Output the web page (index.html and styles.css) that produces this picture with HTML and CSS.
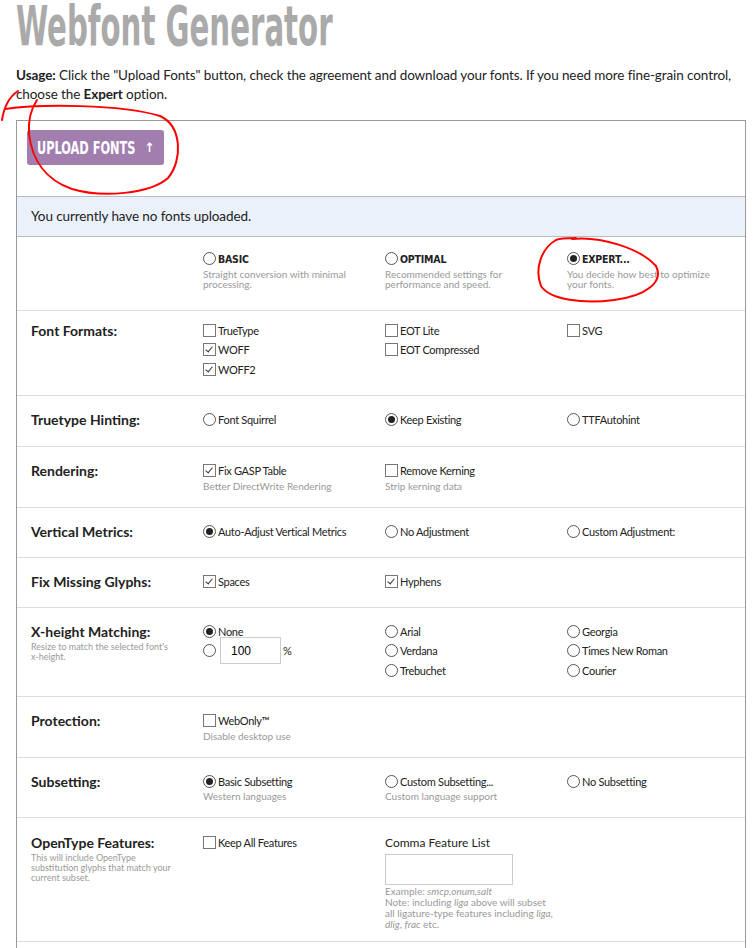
FILE: index.html
```html
<!DOCTYPE html>
<html lang="en">
<head>
    <meta charset="UTF-8">
    <title>Webfont Generator</title>
    <link rel="stylesheet" href="styles.css">
</head>
<body>
    <div class="page">
        <h1 class="title"><span class="title-text">Webfont Generator</span></h1>
        <p class="usage"><b>Usage:</b> Click the "Upload Fonts" button, check the agreement and download your fonts. If you need more fine-grain control, choose the <b>Expert</b> option.</p>

        <div class="generator">
            <div class="upload">
                <button class="upload-btn"><span class="btn-label">UPLOAD FONTS</span><span class="arrow">&#8593;</span></button>
            </div>
            <div class="notice">You currently have no fonts uploaded.</div>

            <div class="row modes">
                <div class="row-label"></div>
                <div class="cell">
                    <div class="opt mode"><span class="radio"></span>BASIC</div>
                    <div class="desc">Straight conversion with minimal processing.</div>
                </div>
                <div class="cell">
                    <div class="opt mode"><span class="radio"></span>OPTIMAL</div>
                    <div class="desc">Recommended settings for performance and speed.</div>
                </div>
                <div class="cell">
                    <div class="opt mode"><span class="radio on"></span>EXPERT...</div>
                    <div class="desc">You decide how best to optimize your fonts.</div>
                </div>
            </div>

            <div class="row formats">
                <div class="row-label">Font Formats:</div>
                <div class="cell">
                    <div class="opt"><span class="check"></span>TrueType</div>
                    <div class="opt"><span class="check on"></span>WOFF</div>
                    <div class="opt"><span class="check on"></span>WOFF2</div>
                </div>
                <div class="cell">
                    <div class="opt"><span class="check"></span>EOT Lite</div>
                    <div class="opt"><span class="check"></span>EOT Compressed</div>
                </div>
                <div class="cell">
                    <div class="opt"><span class="check"></span>SVG</div>
                </div>
            </div>

            <div class="row">
                <div class="row-label">Truetype Hinting:</div>
                <div class="cell"><div class="opt"><span class="radio"></span>Font Squirrel</div></div>
                <div class="cell"><div class="opt"><span class="radio on"></span>Keep Existing</div></div>
                <div class="cell"><div class="opt"><span class="radio"></span>TTFAutohint</div></div>
            </div>

            <div class="row">
                <div class="row-label">Rendering:</div>
                <div class="cell">
                    <div class="opt"><span class="check on"></span>Fix GASP Table</div>
                    <div class="desc">Better DirectWrite Rendering</div>
                </div>
                <div class="cell">
                    <div class="opt"><span class="check"></span>Remove Kerning</div>
                    <div class="desc">Strip kerning data</div>
                </div>
            </div>

            <div class="row short">
                <div class="row-label">Vertical Metrics:</div>
                <div class="cell"><div class="opt"><span class="radio on"></span>Auto-Adjust Vertical Metrics</div></div>
                <div class="cell"><div class="opt"><span class="radio"></span>No Adjustment</div></div>
                <div class="cell"><div class="opt"><span class="radio"></span>Custom Adjustment:</div></div>
            </div>

            <div class="row short">
                <div class="row-label">Fix Missing Glyphs:</div>
                <div class="cell"><div class="opt"><span class="check on"></span>Spaces</div></div>
                <div class="cell"><div class="opt"><span class="check on"></span>Hyphens</div></div>
            </div>

            <div class="row">
                <div class="row-label">X-height Matching:
                    <div class="label-note">Resize to match the selected font's x&#8209;height.</div>
                </div>
                <div class="cell">
                    <div class="opt"><span class="radio on"></span>None</div>
                    <div class="opt"><span class="radio"></span><input class="pct" type="text" value="100"><span class="pct-sign">%</span></div>
                </div>
                <div class="cell">
                    <div class="opt"><span class="radio"></span>Arial</div>
                    <div class="opt"><span class="radio"></span>Verdana</div>
                    <div class="opt"><span class="radio"></span>Trebuchet</div>
                </div>
                <div class="cell">
                    <div class="opt"><span class="radio"></span>Georgia</div>
                    <div class="opt"><span class="radio"></span>Times New Roman</div>
                    <div class="opt"><span class="radio"></span>Courier</div>
                </div>
            </div>

            <div class="row">
                <div class="row-label">Protection:</div>
                <div class="cell">
                    <div class="opt"><span class="check"></span>WebOnly&trade;</div>
                    <div class="desc">Disable desktop use</div>
                </div>
            </div>

            <div class="row">
                <div class="row-label">Subsetting:</div>
                <div class="cell">
                    <div class="opt"><span class="radio on"></span>Basic Subsetting</div>
                    <div class="desc">Western languages</div>
                </div>
                <div class="cell">
                    <div class="opt"><span class="radio"></span>Custom Subsetting...</div>
                    <div class="desc">Custom language support</div>
                </div>
                <div class="cell">
                    <div class="opt"><span class="radio"></span>No Subsetting</div>
                </div>
            </div>

            <div class="row opentype">
                <div class="row-label">OpenType Features:
                    <div class="label-note">This will include OpenType substitution glyphs that match your current subset.</div>
                </div>
                <div class="cell">
                    <div class="opt"><span class="check"></span>Keep All Features</div>
                </div>
                <div class="cell wide">
                    <div class="field-label">Comma Feature List</div>
                    <input class="features" type="text">
                    <div class="field-note">Example: <i>smcp,onum,salt</i><br>Note: including <i>liga</i> above will subset all ligature-type features including <i>liga</i>, <i>dlig</i>, <i>frac</i> etc.</div>
                </div>
            </div>
        </div>
    </div>

    <!-- hand-drawn red marks over the screenshot -->
    <svg class="marks" width="755" height="948" viewBox="0 0 755 948">
        <path d="M18 91 C9 97 4 107 2 120 M5 109 C40 104 120 104 160 116 C182 126 183 160 168 178 C150 194 102 198 72 189 C46 180 32 160 29 134 C28 120 31 109 37 100"/>
        <path d="M572 239 C600 236 640 248 656 266 C664 282 646 296 614 300 C584 304 550 300 541 286 C534 268 542 248 556 240 C560 238 566 238 576 238"/>
    </svg>
</body>
</html>
```

FILE: styles.css
```css
body {
    margin: 0;
    font-family: "Source Sans Pro", Lato, "Open Sans", sans-serif;
    color: #222;
    background: #fff;
}
.page {
    width: 730px;
    margin-left: 16px;
}
.title {
    margin: -2px 0 0;
    height: 58px;
    font-family: "DejaVu Sans Condensed", sans-serif;
    font-weight: bold;
    font-size: 56px;
    line-height: 56px;
    color: #aaa;
}
.title-text {
    display: inline-block;
    transform: scaleX(0.58);
    transform-origin: left top;
    white-space: nowrap;
}
.usage {
    margin: 10px 0 16px;
    font-size: 13.5px;
    letter-spacing: -0.1px;
    line-height: 19px;
}
.generator {
    border: 1px solid #999;
    border-bottom: none;
    padding-bottom: 8px;
}
.upload {
    padding: 9px 10px 31px;
}
.upload-btn {
    display: flex;
    align-items: center;
    width: 137px;
    height: 35px;
    padding: 0 10px;
    border: none;
    border-radius: 3px;
    background: #a27eaf;
    color: #fff;
    font-family: "DejaVu Sans Condensed", sans-serif;
    font-weight: bold;
    font-size: 18px;
    white-space: nowrap;
}
.btn-label {
    flex: none;
    display: inline-block;
    transform: scaleX(0.7);
    transform-origin: left center;
    margin-right: -42px;
}
.upload-btn .arrow {
    font-size: 13px;
    margin-left: 9px;
}
.notice {
    padding: 0 14px;
    height: 39px;
    line-height: 39px;
    background: #eaf1fb;
    border-top: 1px solid #bbb;
    border-bottom: 1px solid #bbb;
    font-size: 13.5px;
    letter-spacing: -0.1px;
}
.row {
    display: grid;
    grid-template-columns: 172px 182px 182px 1fr;
    padding: 14px 14px 16px;
    border-bottom: 1px solid #ddd;
}
.row.modes {
    padding: 12px 14px 21px;
}
.row.formats {
    padding: 10px 14px 16px;
}
.row.short {
    padding-bottom: 15px;
}
.row.opentype {
    padding: 15px 14px 11px;
}
.row-label {
    font-weight: bold;
    font-size: 14px;
    line-height: 20px;
}
.label-note {
    font-weight: normal;
    font-size: 9px;
    line-height: 10px;
    color: #999;
    width: 150px;
}
.opt {
    display: flex;
    align-items: center;
    height: 19.5px;
    font-size: 11px;
    letter-spacing: -0.3px;
}
.mode {
    font-family: "DejaVu Sans Condensed", sans-serif;
    font-weight: bold;
    font-size: 10.5px;
    letter-spacing: -0.2px;
}
.desc {
    font-size: 10px;
    line-height: 10px;
    color: #999;
    width: 160px;
}
.radio,
.check {
    flex: none;
    box-sizing: border-box;
    width: 13px;
    height: 13px;
    margin-right: 2px;
    border: 1px solid #555;
    position: relative;
}
.radio {
    border-radius: 50%;
}
.radio.on::after {
    content: "";
    position: absolute;
    left: 2px;
    top: 2px;
    width: 7px;
    height: 7px;
    border-radius: 50%;
    background: #222;
}
.check {
    border-color: #777;
}
.check.on::after {
    content: "";
    position: absolute;
    left: 3px;
    top: 1px;
    width: 3px;
    height: 6px;
    border: solid #333;
    border-width: 0 1px 1px 0;
    transform: rotate(40deg);
}
.pct {
    box-sizing: border-box;
    width: 61px;
    height: 27px;
    margin-left: 2px;
    padding: 0 10px;
    border: 1px solid #ccc;
    font-family: "Liberation Sans", Arial, sans-serif;
    font-size: 12px;
}
.pct-sign {
    margin-left: 2px;
    font-size: 11px;
}
.field-label {
    font-size: 12px;
    line-height: 20px;
}
.features {
    display: block;
    box-sizing: border-box;
    width: 128px;
    height: 31px;
    border: 1px solid #ccc;
    margin: 1px 0 1px;
}
.field-note {
    width: 170px;
    font-size: 10px;
    line-height: 11px;
    color: #999;
}
.marks {
    position: absolute;
    left: 0;
    top: 0;
    pointer-events: none;
}
.marks path {
    fill: none;
    stroke: #f00;
    stroke-width: 2;
    stroke-linecap: round;
}
```
